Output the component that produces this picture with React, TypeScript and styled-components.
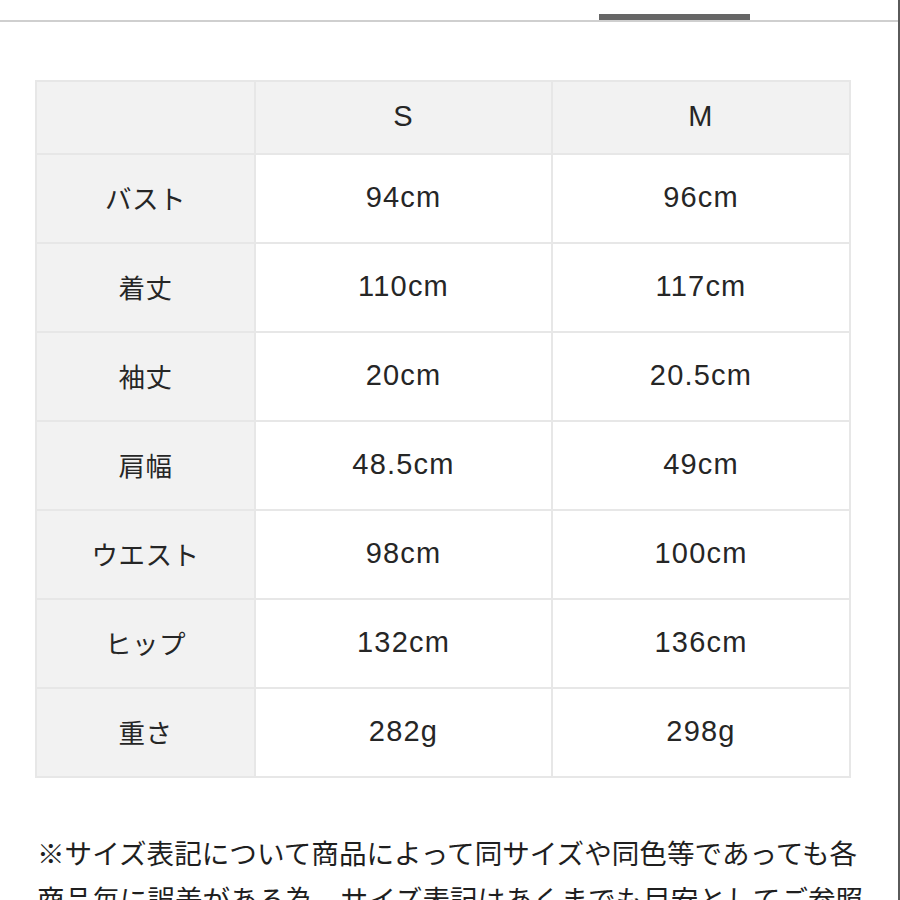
import styled, { createGlobalStyle } from 'styled-components';

const GlobalStyle = createGlobalStyle`
  html, body {
    margin: 0;
    padding: 0;
    background: #fff;
  }
  body {
    font-family: "Liberation Sans", "Noto Sans CJK JP", sans-serif;
    color: #222;
  }
`;

const Page = styled.div`
  width: 900px;
  height: 900px;
  overflow: hidden;
  box-sizing: border-box;
  border-right: 2px solid #5a5a5a;
`;

const TabBar = styled.div`
  height: 20px;
  border-bottom: 2px solid #cfcfcf;
  display: flex;
  align-items: flex-end;
  padding-left: 599px;
`;

const ActiveTab = styled.div`
  width: 151px;
  height: 6px;
  background: #666;
`;

const Table = styled.div`
  margin: 58px 0 0 35px;
  width: 816px;
  box-sizing: border-box;
  padding: 2px;
  background: #e7e7e7;
  display: grid;
  grid-template-columns: 217px 295px 296px;
  grid-template-rows: 71px;
  grid-auto-rows: 87px;
  gap: 2px;
`;

const Cell = styled.div<{ $shade?: boolean; $cjk?: boolean }>`
  background: ${(p) => (p.$shade ? '#f2f2f2' : '#fff')};
  display: flex;
  align-items: center;
  justify-content: center;
  font-size: ${(p) => (p.$cjk ? '26.5px' : '29px')};
  font-family: ${(p) =>
    p.$cjk ? '"Noto Sans CJK JP", sans-serif' : '"Liberation Sans", "Noto Sans CJK JP", sans-serif'};
  font-weight: 400;
  letter-spacing: ${(p) => (p.$cjk ? '0.5px' : '1.2px')};
  color: #262626;
  padding-bottom: ${(p) => (p.$cjk ? '3px' : '2px')};
`;

const Note = styled.p`
  margin: 51px 0 0 37px;
  width: 835px;
  font-family: "Noto Sans CJK JP", sans-serif;
  font-weight: 400;
  font-size: 27.6px;
  line-height: 46px;
  color: #1f1f1f;
`;

const rows: [string, string, string][] = [
  ['バスト', '94cm', '96cm'],
  ['着丈', '110cm', '117cm'],
  ['袖丈', '20cm', '20.5cm'],
  ['肩幅', '48.5cm', '49cm'],
  ['ウエスト', '98cm', '100cm'],
  ['ヒップ', '132cm', '136cm'],
  ['重さ', '282g', '298g'],
];

export default function App() {
  return (
    <Page>
      <GlobalStyle />
      <TabBar>
        <ActiveTab />
      </TabBar>
      <Table>
        <Cell $shade />
        <Cell $shade>S</Cell>
        <Cell $shade>M</Cell>
        {rows.map(([label, s, m]) => [
          <Cell key={label} $shade $cjk>
            {label}
          </Cell>,
          <Cell key={label + 's'}>{s}</Cell>,
          <Cell key={label + 'm'}>{m}</Cell>,
        ])}
      </Table>
      <Note>
        ※サイズ表記について商品によって同サイズや同色等であっても各商品毎に誤差がある為、サイズ表記はあくまでも目安としてご参照ください。
      </Note>
    </Page>
  );
}
